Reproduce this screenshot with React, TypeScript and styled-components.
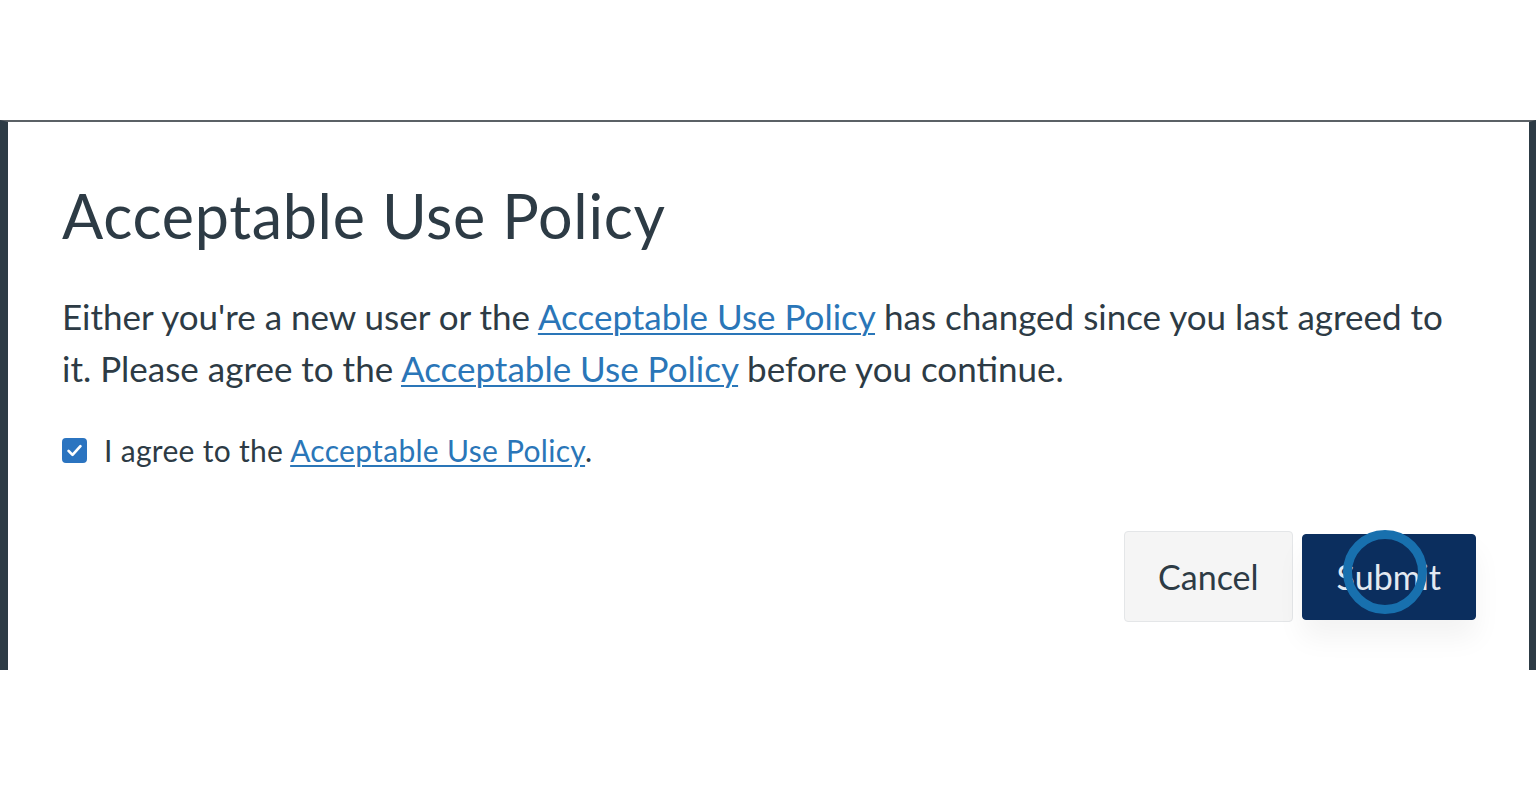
import React, { useState } from "react";
import styled, { createGlobalStyle } from "styled-components";

const GlobalStyle = createGlobalStyle`
  html, body {
    margin: 0;
    padding: 0;
    background: #ffffff;
  }
  body {
    font-family: Lato, "Open Sans", "Liberation Sans", sans-serif;
    color: #2d3b45;
  }
  * {
    box-sizing: border-box;
  }
`;

const Page = styled.div`
  display: flex;
  flex-direction: column;
  width: 1536px;
  min-height: 791px;
  background: #ffffff;
`;

const TopSpace = styled.div`
  height: 120px;
`;

const Frame = styled.section`
  height: 550px;
  border-top: 2px solid #5b6166;
  border-left: 8px solid #2d3b45;
  border-right: 7px solid #2d3b45;
  background: #ffffff;
  padding: 59px 53px 0 54px;
  display: flex;
  flex-direction: column;
`;

const Title = styled.h1`
  margin: 0;
  font-size: 61px;
  line-height: 70px;
  font-weight: 400;
  color: #2d3b45;
  letter-spacing: 0.7px;
`;

const Paragraph = styled.p`
  margin: 39px 0 0;
  padding-right: 26px;
  font-size: 35px;
  line-height: 52px;
  color: #2d3b45;
`;

const PolicyLink = styled.a`
  color: #2a76b8;
  text-decoration: underline;
  text-underline-offset: 3px;
  text-decoration-thickness: 2px;
  cursor: pointer;
`;

const AgreeRow = styled.label`
  margin-top: 36px;
  display: flex;
  align-items: center;
  gap: 17px;
  font-size: 30px;
  line-height: 40px;
  letter-spacing: 0.3px;
  color: #2d3b45;
  cursor: pointer;
`;

const Box = styled.span<{ $checked: boolean }>`
  width: 25px;
  height: 25px;
  border-radius: 4px;
  background: ${(p) => (p.$checked ? "#2b74c0" : "#ffffff")};
  border: 2px solid ${(p) => (p.$checked ? "#2b74c0" : "#8b969e")};
  display: flex;
  align-items: center;
  justify-content: center;
  flex-shrink: 0;
`;

const HiddenInput = styled.input`
  position: absolute;
  opacity: 0;
  width: 0;
  height: 0;
`;

const Actions = styled.div`
  margin-top: 61px;
  display: flex;
  justify-content: flex-end;
  align-items: center;
  gap: 9px;
`;

const Button = styled.button<{ $primary?: boolean }>`
  position: relative;
  font-family: Lato, "Open Sans", "Liberation Sans", sans-serif;
  font-size: 34px;
  line-height: 40px;
  height: ${(p) => (p.$primary ? "86px" : "91px")};
  padding: ${(p) => (p.$primary ? "0 34px" : "0 33px")};
  border-radius: 4px;
  border: 1px solid ${(p) => (p.$primary ? "#0b2e5e" : "#e4e6e8")};
  background: ${(p) => (p.$primary ? "#0b2e5e" : "#f5f5f5")};
  color: ${(p) => (p.$primary ? "#e3e9f1" : "#2d3b45")};
  box-shadow: ${(p) => (p.$primary ? "0 18px 28px rgba(0, 0, 0, 0.05)" : "none")};
  cursor: pointer;
`;

const ClickRing = styled.span`
  position: absolute;
  left: 40px;
  top: -5px;
  width: 84px;
  height: 84px;
  border-radius: 50%;
  border: 9px solid #1870ae;
  pointer-events: none;
`;

const Check = () => (
  <svg width="19" height="19" viewBox="0 0 24 24" fill="none">
    <path
      d="M4.5 12.5l5 5L19.5 6.5"
      stroke="#ffffff"
      strokeWidth="3.4"
      strokeLinecap="round"
      strokeLinejoin="round"
    />
  </svg>
);

export default function App() {
  const [agreed, setAgreed] = useState(true);

  return (
    <Page>
      <GlobalStyle />
      <TopSpace />
      <Frame>
        <Title>Acceptable Use Policy</Title>
        <Paragraph>
          Either you're a new user or the <PolicyLink>Acceptable Use Policy</PolicyLink> has
          changed since you last agreed to it. Please agree to the{" "}
          <PolicyLink>Acceptable Use Policy</PolicyLink> before you continue.
        </Paragraph>
        <AgreeRow>
          <HiddenInput
            type="checkbox"
            checked={agreed}
            onChange={() => setAgreed(!agreed)}
          />
          <Box $checked={agreed}>{agreed && <Check />}</Box>
          <span>
            I agree to the <PolicyLink>Acceptable Use Policy</PolicyLink>.
          </span>
        </AgreeRow>
        <Actions>
          <Button type="button">Cancel</Button>
          <Button type="button" $primary>
            Submit
            <ClickRing />
          </Button>
        </Actions>
      </Frame>
    </Page>
  );
}
